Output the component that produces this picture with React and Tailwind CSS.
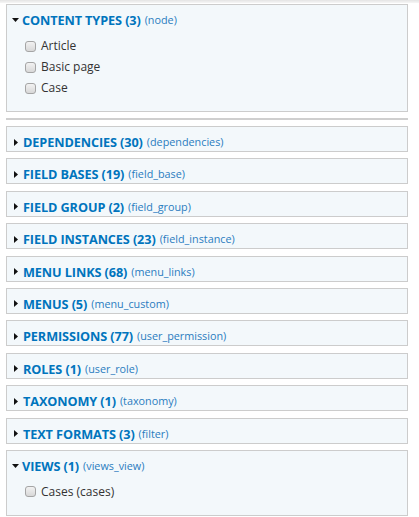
import React from "react";

const FONT = { fontFamily: '"Open Sans", "Noto Sans", sans-serif' };

function Down() {
  return (
    <svg width="7" height="4" viewBox="0 0 7 4" className="mr-[3px] ml-[-1px]">
      <polygon points="0,0 7,0 3.5,4" fill="#111" />
    </svg>
  );
}
function Right() {
  return (
    <svg width="4" height="7" viewBox="0 0 4 7" className="ml-[1px] mr-[5px]">
      <polygon points="0,0 4,3.5 0,7" fill="#111" />
    </svg>
  );
}

function Checkbox({ label }) {
  return (
    <div className="flex items-center h-[21px] pl-[18px]">
      <div className="w-[11px] h-[11px] rounded-[3px] border border-[#a5a5a5] bg-gradient-to-b from-[#f2f2f2] to-[#d8d8d8] mr-[5px]" />
      <span className="text-[12px] leading-[16px] text-[#333]">{label}</span>
    </div>
  );
}

function Legend({ title, desc, open }) {
  return (
    <div className="flex items-center h-[16px] pl-[6px]">
      {open ? <Down /> : <Right />}
      <span className="text-[12.7px] leading-[16px] font-bold text-[#0074bd] tracking-[-0.1px]">{title}</span>
      <span className="text-[10.8px] leading-[16px] text-[#2a7cbf] ml-[4px]">{desc}</span>
    </div>
  );
}

function Box({ title, desc, items }) {
  const open = !!items;
  return (
    <div className="border border-[#cccccc] bg-[#f3f8fb] pt-[7px] pb-[1px]">
      <Legend title={title} desc={desc} open={open} />
      {open && (
        <div className="pt-[7.5px] pb-[11.5px]">
          {items.map((it) => (
            <Checkbox key={it} label={it} />
          ))}
        </div>
      )}
    </div>
  );
}

const collapsed = [
  ["DEPENDENCIES (30)", "(dependencies)"],
  ["FIELD BASES (19)", "(field_base)"],
  ["FIELD GROUP (2)", "(field_group)"],
  ["FIELD INSTANCES (23)", "(field_instance)"],
  ["MENU LINKS (68)", "(menu_links)"],
  ["MENUS (5)", "(menu_custom)"],
  ["PERMISSIONS (77)", "(user_permission)"],
  ["ROLES (1)", "(user_role)"],
  ["TAXONOMY (1)", "(taxonomy)"],
  ["TEXT FORMATS (3)", "(filter)"],
];

export default function App() {
  return (
    <div className="w-[419px] h-[517px] bg-white overflow-hidden" style={FONT}>
      <div className="h-[3px] bg-gradient-to-b from-[#e4e4e4] to-[#f6f6f6]" />
      <div className="px-[6px] pt-[1px] w-[414px]">
        <Box title="CONTENT TYPES (3)" desc="(node)" items={["Article", "Basic page", "Case"]} />
        <div className="h-[2px] bg-[#cfcfcf] mt-[6px]" />
        <div className="flex flex-col gap-[6.4px] mt-[6px]">
          {collapsed.map(([t, d]) => (
            <Box key={t} title={t} desc={d} />
          ))}
          <Box title="VIEWS (1)" desc="(views_view)" items={["Cases (cases)"]} />
        </div>
      </div>
    </div>
  );
}
